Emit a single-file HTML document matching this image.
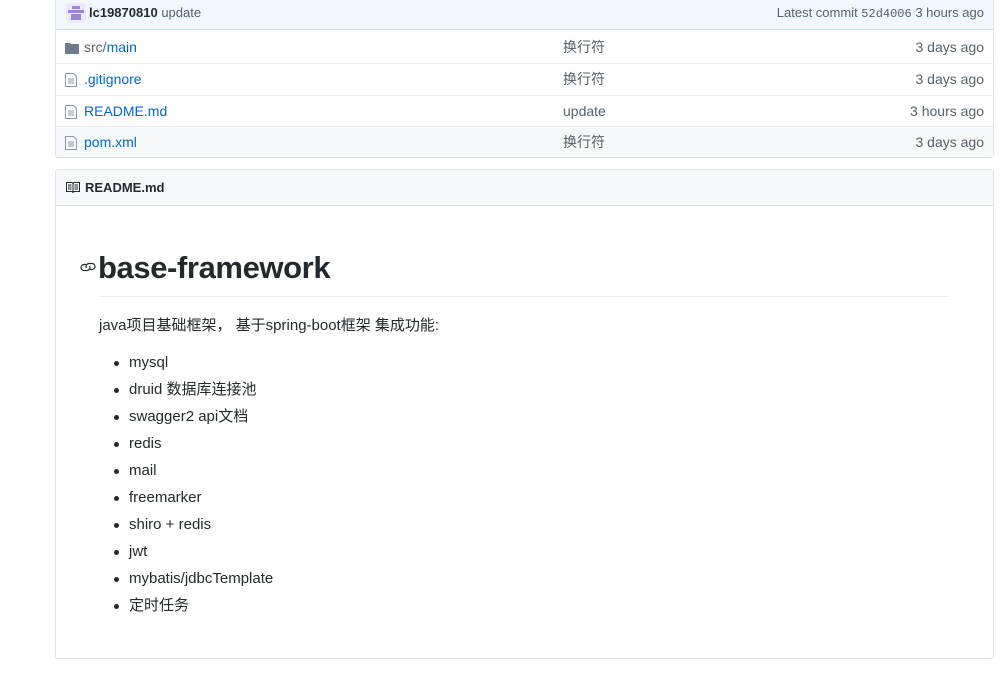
<!DOCTYPE html>
<html><head><meta charset="utf-8"><style>
*{margin:0;padding:0;box-sizing:border-box}
body{width:1000px;height:689px;background:#fff;font-family:"Liberation Sans","Noto Sans CJK SC",sans-serif;font-size:14px;color:#24292e;position:relative;overflow:hidden}
.box{position:absolute;left:55px;width:939px;border:1px solid #e1e4e8;border-radius:3px}
.top{position:absolute;left:0;top:0;width:100%;height:32px;background:#f1f8ff;border-bottom:1px solid #c8e1ff}
.row{position:absolute;left:0;width:100%;height:32px;border-top:1px solid #eaecef;line-height:30px}
.row .n{position:absolute;left:28px;color:#0366d6}
.row .m{position:absolute;left:507px;color:#586069}
.row .a{position:absolute;right:9px;color:#586069}
.ic{position:absolute;left:9px;top:9px}
.t{position:absolute;white-space:nowrap;line-height:1.2}
ul li{position:absolute;left:129px;font-size:15px;list-style:none;line-height:20px;height:20px;white-space:nowrap}
ul li:before{content:"";position:absolute;left:-15px;top:8px;width:5px;height:5px;border-radius:50%;background:#24292e}
</style></head><body>
<div class="box" style="top:-2px;height:160px;border-top:none">
 <div class="top">
  <svg style="position:absolute;left:10px;top:5px" width="20" height="20" viewBox="0 0 20 20"><rect width="20" height="20" rx="3" fill="#ecebf5"/><rect x="6" y="3" width="8" height="3" fill="#9a86d8"/><rect x="2" y="7" width="16" height="3" fill="#9a86d8"/><rect x="5" y="11" width="10" height="6" fill="#9a86d8"/></svg>
  <span class="t" style="left:33px;top:7px;font-size:13px"><b>lc19870810</b> <span style="color:#586069">update</span></span>
  <span class="t" style="right:9px;top:7px;font-size:13px;color:#586069">Latest commit <span style="font-family:'Liberation Mono',monospace;font-size:12px">52d4006</span> 3 hours ago</span>
 </div>
 <div class="row" style="top:34px;border-top:none">
  <svg class="ic" width="14" height="14" viewBox="0 0 14 14"><path d="M0 2h5l1 1h8v10H0z" fill="#6a7b8e"/></svg>
  <span class="n"><span style="color:#586069">src/</span>main</span><span class="m">换行符</span><span class="a">3 days ago</span></div>
 <div class="row" style="top:65px">
  <svg class="ic" width="12" height="14" viewBox="0 0 12 14"><path d="M.5.5h8l3 3v10h-11z" fill="none" stroke="#8a98aa"/><path d="M3 6h6M3 8h6M3 10h6" stroke="#8a98aa"/></svg>
  <span class="n">.gitignore</span><span class="m">换行符</span><span class="a">3 days ago</span></div>
 <div class="row" style="top:97px">
  <svg class="ic" width="12" height="14" viewBox="0 0 12 14"><path d="M.5.5h8l3 3v10h-11z" fill="none" stroke="#8a98aa"/><path d="M3 6h6M3 8h6M3 10h6" stroke="#8a98aa"/></svg>
  <span class="n">README.md</span><span class="m">update</span><span class="a">3 hours ago</span></div>
 <div class="row" style="top:128px;background:#f6f8fa;height:31px">
  <svg class="ic" width="12" height="14" viewBox="0 0 12 14"><path d="M.5.5h8l3 3v10h-11z" fill="none" stroke="#8a98aa"/><path d="M3 6h6M3 8h6M3 10h6" stroke="#8a98aa"/></svg>
  <span class="n">pom.xml</span><span class="m">换行符</span><span class="a">3 days ago</span></div>
</div>
<div class="box" style="top:169px;height:490px">
 <div style="height:36px;background:#f6f8fa;border-bottom:1px solid #e1e4e8;position:relative">
  <svg style="position:absolute;left:10px;top:11px" width="14" height="12" viewBox="0 0 14 12"><path d="M.5 1.5h5.5l1 1 1-1h5.5v9h-5.5l-1 1-1-1H.5z" fill="none" stroke="#24292e"/><path d="M7 2.5v8M2 4h3.5M2 6h3.5M2 8h3.5M8.5 4H12M8.5 6H12M8.5 8H12" stroke="#24292e"/></svg>
  <span class="t" style="left:29px;top:10px;font-size:13px;font-weight:bold">README.md</span>
 </div>
</div>
<svg style="position:absolute;left:80px;top:261px" width="16" height="12" viewBox="0 0 16 12"><path d="M6 3.5H4a3 3 0 0 0 0 6h3a3 3 0 0 0 2.5-4.5M10 8.5h2a3 3 0 0 0 0-6H9a3 3 0 0 0-2.5 4.5" fill="none" stroke="#24292e" stroke-width="1.2"/></svg>
<div class="t" style="left:98px;top:249px;font-size:31px;font-weight:bold;letter-spacing:-0.4px">base-framework</div>
<div style="position:absolute;left:99px;top:296px;width:850px;height:1px;background:#eaecef"></div>
<div class="t" style="left:99px;top:317px;font-size:15px">java项目基础框架， 基于spring-boot框架 集成功能:</div>
<ul>
<li style="top:353px">mysql</li>
<li style="top:380px">druid 数据库连接池</li>
<li style="top:407px">swagger2 api文档</li>
<li style="top:434px">redis</li>
<li style="top:461px">mail</li>
<li style="top:488px">freemarker</li>
<li style="top:515px">shiro + redis</li>
<li style="top:542px">jwt</li>
<li style="top:569px">mybatis/jdbcTemplate</li>
<li style="top:596px">定时任务</li>
</ul>
</body></html>
